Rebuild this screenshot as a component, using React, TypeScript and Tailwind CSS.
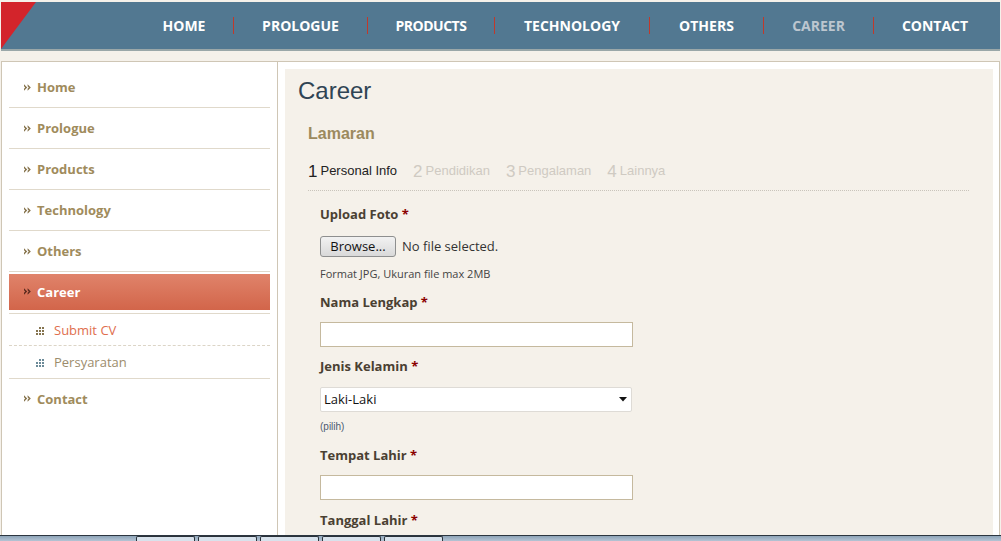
const navItems = [
  { label: 'HOME', w: 'w-[98px]' },
  { label: 'PROLOGUE', w: 'w-[133px]' },
  { label: 'PRODUCTS', w: 'w-[126px]' },
  { label: 'TECHNOLOGY', w: 'w-[154px]' },
  { label: 'OTHERS', w: 'w-[113px]' },
  { label: 'CAREER', w: 'w-[109px]' },
  { label: 'CONTACT', w: 'w-[122px]' }
]

const sideItems = ['Home', 'Prologue', 'Products', 'Technology', 'Others']

const steps = [
  { n: '1', label: 'Personal Info', active: true },
  { n: '2', label: 'Pendidikan', active: false },
  { n: '3', label: 'Pengalaman', active: false },
  { n: '4', label: 'Lainnya', active: false }
]

function Chevrons({ color = '#85724a' }: { color?: string }) {
  return (
    <svg width="7" height="7" viewBox="0 0 7 7" className="shrink-0 -translate-y-[1px]">
      <path d="M0 0.3 L3.2 3.5 L0 6.7 L0 4.7 L1.2 3.5 L0 2.3 Z M3.6 0.3 L6.8 3.5 L3.6 6.7 L3.6 4.7 L4.8 3.5 L3.6 2.3 Z" fill={color} />
    </svg>
  )
}

function Dots({ color }: { color: string }) {
  const pts = [
    [3, 0], [6, 0],
    [0, 3], [3, 3], [6, 3],
    [0, 6], [3, 6], [6, 6]
  ]
  return (
    <svg width="8" height="8" viewBox="0 0 8 8" className="shrink-0">
      {pts.map(([x, y]) => (
        <rect key={`${x}-${y}`} x={x} y={y} width="2" height="2" fill={color} />
      ))}
    </svg>
  )
}

function Label({ text }: { text: string }) {
  return (
    <div className="h-[20px] leading-[20px] text-[13px] font-bold text-[#4a4032]">
      {text} <span className="text-[#8b0000]">*</span>
    </div>
  )
}

export default function App() {
  return (
    <div
      className="h-[541px] w-[1001px] overflow-hidden bg-[#f5f1ea] flex flex-col"
      style={{ fontFamily: '"Open Sans", "DejaVu Sans", sans-serif' }}
    >
      {/* Header */}
      <header className="mt-[2px] mx-[1px] h-[49px] shrink-0 bg-[#527891] border-b-2 border-[#9aa7a8] flex items-center">
        <svg width="36" height="47" viewBox="0 0 36 47" className="self-start shrink-0">
          <polygon points="0,0 35,0 0,47" fill="#d3242b" />
        </svg>
        <nav className="ml-auto mr-[4px] flex items-center">
          {navItems.map((item, i) => (
            <div key={item.label} className="flex items-center">
              {i > 0 && <div className="w-[1px] h-[17px] bg-[#c0392b]" />}
              <span
                className={`${item.w} text-center text-[14px] font-bold whitespace-nowrap ${
                  item.label === 'CAREER' ? 'text-[#bcc6cf]' : 'text-white'
                } ${item.label === 'PRODUCTS' ? 'tracking-[-0.5px]' : ''}`}
              >
                {item.label}
              </span>
            </div>
          ))}
        </nav>
      </header>

      {/* Main */}
      <div className="mt-[10px] mx-[1px] flex-1 min-h-0 border-t border-x border-[#cfc6b5] bg-white flex overflow-hidden">
        {/* Sidebar */}
        <aside className="w-[276px] shrink-0 border-r border-[#cfc6b5] pt-[5px]">
          <ul className="mx-[7px]">
            {sideItems.map((item) => (
              <li
                key={item}
                className="h-[41px] pt-[2px] border-b border-[#e0d9cb] flex items-center gap-[6px] pl-[15px] text-[13px] font-bold text-[#a08b5c]"
              >
                <Chevrons />
                {item}
              </li>
            ))}
            <li className="pt-[2px] pb-[3px] border-b border-[#e0d9cb]">
              <div className="h-[36px] pt-[1px] bg-linear-to-b from-[#e0836a] to-[#d2654a] flex items-center gap-[6px] pl-[15px] text-[13px] font-bold text-white">
                <Chevrons color="#5a2a1e" />
                Career
              </div>
            </li>
            <li className="h-[32px] pt-[2px] border-b border-dashed border-[#dcd5c7] flex items-center gap-[10px] pl-[27px] text-[13px] text-[#e06e4e]">
              <Dots color="#85744f" />
              Submit CV
            </li>
            <li className="h-[33px] pt-[1px] border-b border-[#e0d9cb] flex items-center gap-[10px] pl-[27px] text-[13px] text-[#9c8c6c]">
              <Dots color="#6b8a98" />
              Persyaratan
            </li>
            <li className="h-[41px] flex items-center gap-[6px] pl-[15px] text-[13px] font-bold text-[#a08b5c]">
              <Chevrons />
              Contact
            </li>
          </ul>
        </aside>

        {/* Content */}
        <main className="flex-1 min-w-0 pl-[7px] pr-[6px] pt-[7px]">
          <div className="h-full bg-[#f5f1ea] pl-[13px] pr-[24px] pt-[8px]">
            <h1
              className="h-[28px] leading-[28px] text-[24px] text-[#2f4454]"
              style={{ fontFamily: '"Liberation Sans", Arial, sans-serif' }}
            >
              Career
            </h1>
            <div className="pl-[10px]">
              <h2
                className="mt-[19px] h-[20px] leading-[20px] text-[16px] font-bold text-[#9c8a5e]"
                style={{ fontFamily: '"Liberation Sans", Arial, sans-serif' }}
              >
                Lamaran
              </h2>
              <div
                className="mt-[16px] pb-[10px] border-b border-dotted border-[#c9c4bb] flex items-baseline h-[31px]"
                style={{ fontFamily: '"Liberation Sans", Arial, sans-serif' }}
              >
                {steps.map((s) => (
                  <div
                    key={s.n}
                    className={`flex items-baseline mr-[16px] ${s.active ? 'text-[#222]' : 'text-[#cfcac2]'}`}
                  >
                    <span className="text-[17px] leading-[20px] translate-y-[2px] mr-[3px]">{s.n}</span>
                    <span className="text-[13px] leading-[20px]">{s.label}</span>
                  </div>
                ))}
              </div>

              <div className="pl-[12px]">
                <div className="mt-[13px]">
                  <Label text="Upload Foto" />
                </div>
                <div className="mt-[12px] flex items-center gap-[6px] h-[21px]">
                  <div className="w-[76px] h-[21px] rounded-[3px] border border-[#8e8f8f] bg-linear-to-b from-[#f2f2f2] to-[#d9d9d9] flex items-center justify-center text-[13px] text-[#111]">
                    Browse...
                  </div>
                  <span className="text-[13px] text-[#333]">No file selected.</span>
                </div>
                <div className="mt-[10px] h-[14px] leading-[14px] text-[11px] text-[#444]">
                  Format JPG, Ukuran file max 2MB
                </div>
                <div className="mt-[11px]">
                  <Label text="Nama Lengkap" />
                </div>
                <div className="mt-[10px] w-[313px] h-[25px] border border-[#c5b99e] bg-white" />
                <div className="mt-[9px]">
                  <Label text="Jenis Kelamin" />
                </div>
                <div className="mt-[11px] w-[312px] h-[25px] border border-[#dedbd6] rounded-[2px] bg-white flex items-center justify-between pl-[3px] pr-[4px]">
                  <span className="text-[13px] text-[#111]">Laki-Laki</span>
                  <svg width="8" height="5" viewBox="0 0 8 5">
                    <polygon points="0,0 8,0 4,4.5" fill="#111" />
                  </svg>
                </div>
                <div
                  className="mt-[9px] h-[12px] leading-[12px] text-[10px] text-[#4d5a70]"
                  style={{ fontFamily: '"Liberation Sans", Arial, sans-serif' }}
                >
                  (pilih)
                </div>
                <div className="mt-[12px]">
                  <Label text="Tempat Lahir" />
                </div>
                <div className="mt-[10px] w-[313px] h-[25px] border border-[#c5b99e] bg-white" />
                <div className="mt-[10px]">
                  <Label text="Tanggal Lahir" />
                </div>
              </div>
            </div>
          </div>
        </main>
      </div>

      {/* Taskbar strip */}
      <div className="h-[6px] shrink-0 border-t border-[#2c3640] bg-linear-to-b from-[#8ea4b8] to-[#b4c4d4] flex">
        <div className="w-[136px]" />
        {[0, 1, 2, 3, 4].map((i) => (
          <div key={i} className="w-[59px] mr-[3px] border-x border-t border-[#2a323a] bg-[#d8e2ec] rounded-t-[2px]" />
        ))}
      </div>
    </div>
  )
}
